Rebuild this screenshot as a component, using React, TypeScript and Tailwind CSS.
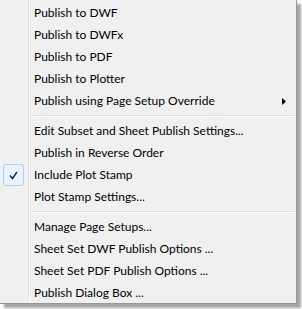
import React from "react";

type Item = { label: string; check?: boolean; sub?: boolean } | "sep";

const items: Item[] = [
  { label: "Publish to DWF" },
  { label: "Publish to DWFx" },
  { label: "Publish to PDF" },
  { label: "Publish to Plotter" },
  { label: "Publish using Page Setup Override", sub: true },
  "sep",
  { label: "Edit Subset and Sheet Publish Settings..." },
  { label: "Publish in Reverse Order" },
  { label: "Include Plot Stamp", check: true },
  { label: "Plot Stamp Settings..." },
  "sep",
  { label: "Manage Page Setups..." },
  { label: "Sheet Set DWF Publish Options ..." },
  { label: "Sheet Set PDF Publish Options ..." },
  { label: "Publish Dialog Box ..." },
];

export default function App() {
  return (
    <div className="w-[302px] h-[309px] bg-white overflow-hidden">
      <div
        className="w-[297px] h-[304px] border-r border-b border-[#979797] bg-[linear-gradient(to_right,#f0f0f0_28px,#e2e3e3_28px,#e2e3e3_29px,#ffffff_29px,#ffffff_30px,#f0f0f0_30px)] shadow-[4px_4px_2px_rgba(0,0,0,0.35)] pt-[2px] text-[12px] text-black"
        style={{ fontFamily: 'Lato, "Liberation Sans", sans-serif' }}
      >
        {items.map((it, i) =>
          it === "sep" ? (
            <div key={i} className="py-[3px] pl-[30px] pr-[1px]">
              <div className="h-[1px] bg-[#e0e0e0]" />
              <div className="h-[1px] bg-white" />
            </div>
          ) : (
            <div key={i} className="flex h-[22px] items-center">
              <div className="w-[34px] h-[22px] flex items-center pl-[3px]">
                {it.check && (
                  <div className="w-[21px] h-[22px] rounded-[3px] border border-[#aecff7] bg-[#eaf2fc] flex items-center justify-center">
                    <svg width="9" height="9" viewBox="0 0 9 9">
                      <path d="M1 4.5 L3.5 7.5 L8 1" fill="none" stroke="#0c1f7a" strokeWidth="1.4" />
                    </svg>
                  </div>
                )}
              </div>
              <div className="flex-1 whitespace-nowrap leading-none">{it.label}</div>
              {it.sub && (
                <svg width="4" height="7" viewBox="0 0 4 7" className="mr-[10px]">
                  <path d="M0 0 L4 3.5 L0 7 Z" fill="#000" />
                </svg>
              )}
            </div>
          )
        )}
      </div>
    </div>
  );
}
